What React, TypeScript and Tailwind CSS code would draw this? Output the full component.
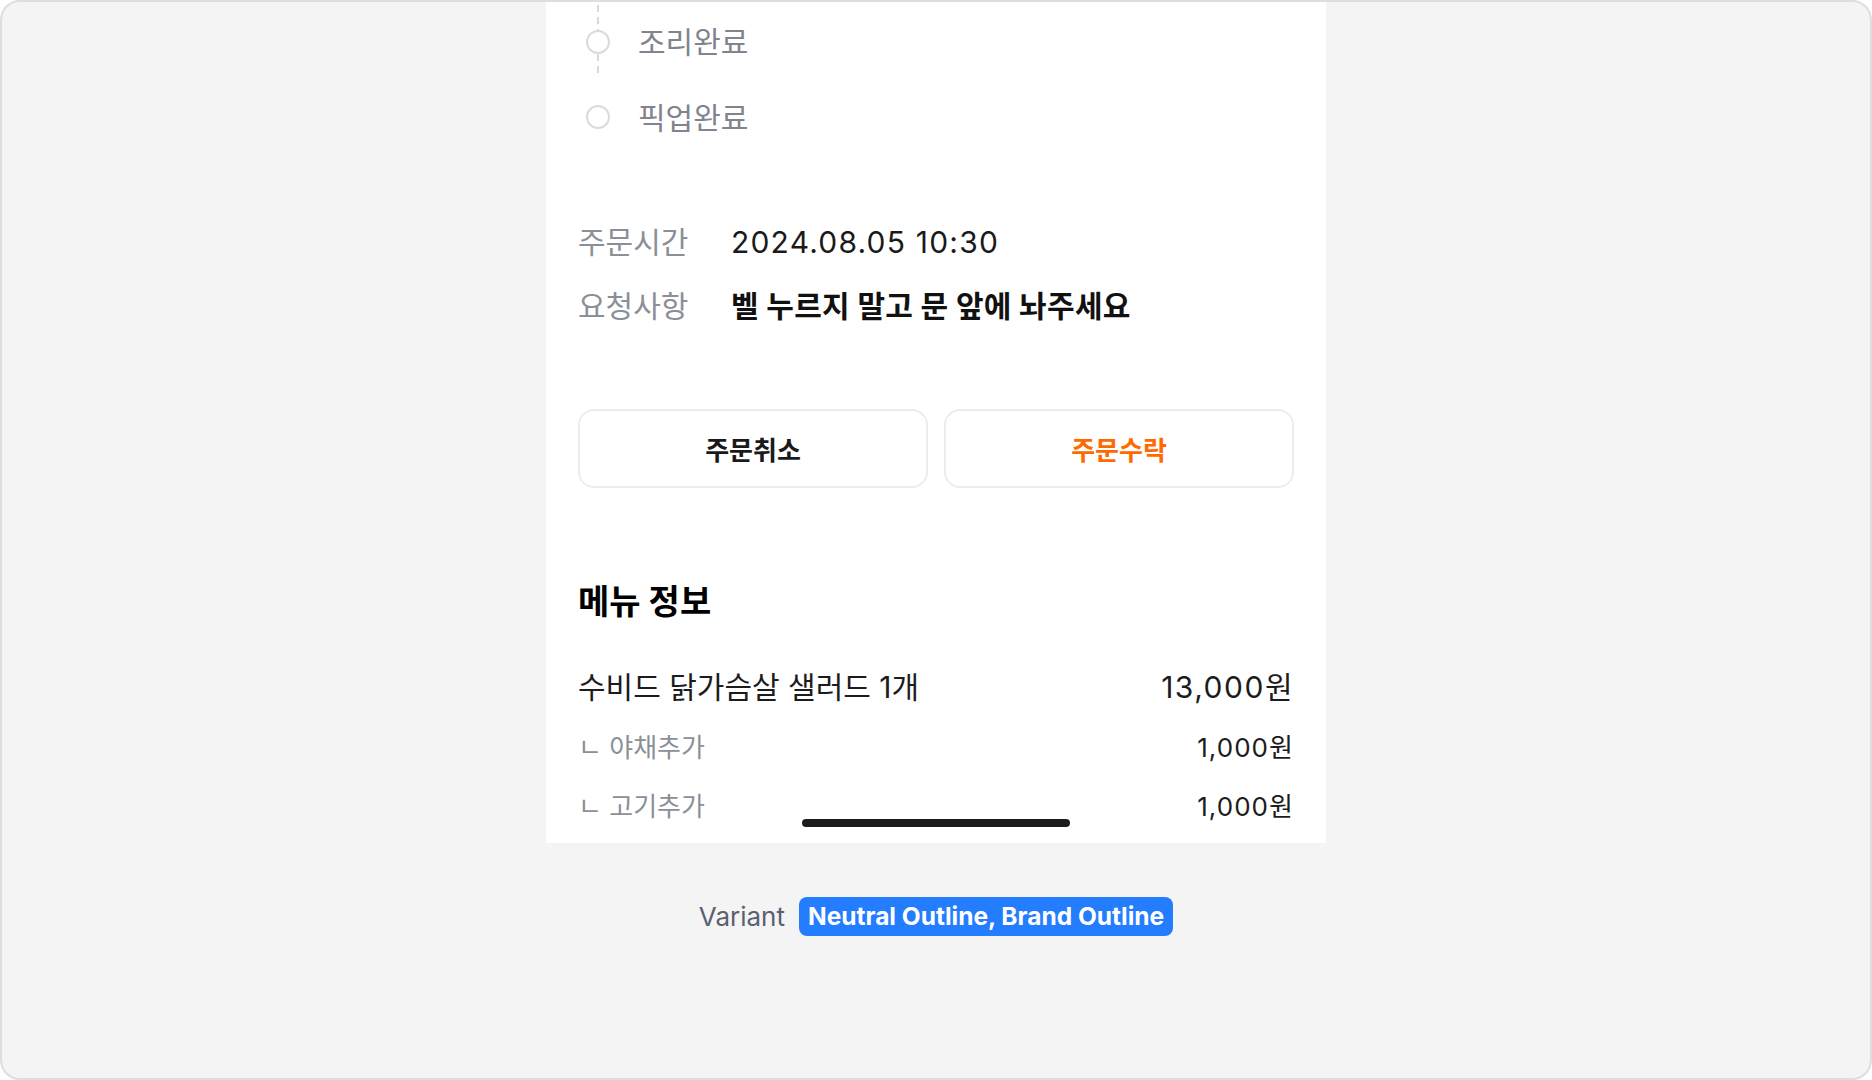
import React from 'react';

const font = 'font-["Inter","Noto_Sans_CJK_KR",sans-serif]';

const Dashed = ({ h }: { h: number }) => (
  <svg width="2" height={h} className="block shrink-0">
    <line x1="1" y1="0" x2="1" y2={h} stroke="#d6d8dd" strokeWidth="2" strokeDasharray="7 5" />
  </svg>
);

const Circle = () => <div className="w-6 h-6 shrink-0 rounded-full border-2 border-[#d9dbe0] bg-white" />;

const App = () => {
  const options = [
    { name: '야채추가', price: '1,000원' },
    { name: '고기추가', price: '1,000원' },
  ];

  return (
    <div className={`w-[1872px] h-[1080px] bg-[#f4f4f4] border-2 border-[#dedede] rounded-[20px] flex flex-col items-center overflow-hidden ${font}`}>
      <div className="relative w-[780px] h-[841px] shrink-0 bg-white px-8">
        {/* progress steps */}
        <div className="ml-2 flex flex-col">
          <div className="h-[77px] flex items-start gap-7">
            <div className="w-6 flex flex-col items-center">
              <div className="pt-[3px]">
                <Dashed h={25} />
              </div>
              <Circle />
              <Dashed h={24} />
            </div>
            <div className="h-[76px] pt-[4px] flex items-center text-[30px] text-[#80848d]">조리완료</div>
          </div>
          <div className="h-[75px] flex items-center gap-7">
            <Circle />
            <div className="pt-[3px] text-[30px] text-[#80848d]">픽업완료</div>
          </div>
        </div>

        {/* order info */}
        <div className="mt-[67px] flex flex-col gap-6">
          <div className="flex items-center h-10 pt-[3px]">
            <span className="w-[153px] shrink-0 text-[30px] text-[#8b8f97]">주문시간</span>
            <span className="text-[30px] tracking-[0.04em] text-[#1a1a1a]">2024.08.05 10:30</span>
          </div>
          <div className="flex items-center h-10 pt-[3px]">
            <span className="w-[153px] shrink-0 text-[30px] text-[#8b8f97]">요청사항</span>
            <span className="text-[30px] tracking-[0.01em] font-bold text-[#111111]">벨 누르지 말고 문 앞에 놔주세요</span>
          </div>
        </div>

        {/* actions */}
        <div className="mt-[84px] grid grid-cols-2 gap-4">
          <button className="h-[79px] pt-[3px] rounded-2xl border-2 border-[#ececec] bg-white text-[26px] font-bold text-[#1a1a1a]">
            주문취소
          </button>
          <button className="h-[79px] pt-[3px] rounded-2xl border-2 border-[#ececec] bg-white text-[26px] font-bold text-[#ff6a00]">
            주문수락
          </button>
        </div>

        {/* menu */}
        <h2 className="mt-[91px] h-10 pt-[5px] flex items-center text-[34px] font-bold text-black">메뉴 정보</h2>
        <div className="mt-[46px] h-10 pt-[4px] flex items-center justify-between text-[30px] text-[#1c1c1c]">
          <span>수비드 닭가슴살 샐러드 1개</span>
          <span className="tracking-[0.05em]">13,000원</span>
        </div>
        <div className="mt-[22px] flex flex-col gap-[23px]">
          {options.map((o, i) => (
            <div key={i} className="h-9 pt-[4px] flex items-center justify-between text-[26px]">
              <span className="text-[#8b8f97]">ㄴ {o.name}</span>
              <span className="tracking-[0.04em] text-[#1c1c1c]">{o.price}</span>
            </div>
          ))}
        </div>

        <div className="absolute bottom-4 left-1/2 -translate-x-1/2 w-[268px] h-2 rounded-full bg-[#1c1c1e]" />
      </div>

      <div className="mt-[54px] flex items-center gap-3.5">
        <span className="text-[26px] text-[#596070]">Variant</span>
        <span className="h-[39px] px-[9px] flex items-center rounded-lg bg-[#247cff] text-[24.5px] font-bold text-white">
          Neutral Outline, Brand Outline
        </span>
      </div>
    </div>
  );
};

export default App;
